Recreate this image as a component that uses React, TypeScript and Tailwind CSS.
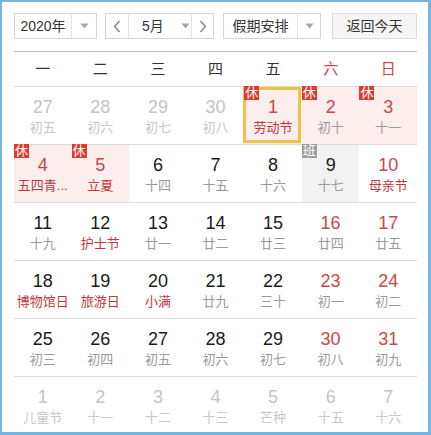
import React from "react";

type Cell = {
  d: number;
  l: string;
  other?: boolean;
  red?: boolean;
  fest?: boolean;
  rest?: boolean;
  work?: boolean;
  sel?: boolean;
};

const rows: Cell[][] = [
  [
    { d: 27, l: "初五", other: true },
    { d: 28, l: "初六", other: true },
    { d: 29, l: "初七", other: true },
    { d: 30, l: "初八", other: true },
    { d: 1, l: "劳动节", red: true, fest: true, rest: true, sel: true },
    { d: 2, l: "初十", red: true, rest: true },
    { d: 3, l: "十一", red: true, rest: true },
  ],
  [
    { d: 4, l: "五四青...", red: true, fest: true, rest: true },
    { d: 5, l: "立夏", red: true, fest: true, rest: true },
    { d: 6, l: "十四" },
    { d: 7, l: "十五" },
    { d: 8, l: "十六" },
    { d: 9, l: "十七", work: true },
    { d: 10, l: "母亲节", red: true, fest: true },
  ],
  [
    { d: 11, l: "十九" },
    { d: 12, l: "护士节", fest: true },
    { d: 13, l: "廿一" },
    { d: 14, l: "廿二" },
    { d: 15, l: "廿三" },
    { d: 16, l: "廿四", red: true },
    { d: 17, l: "廿五", red: true },
  ],
  [
    { d: 18, l: "博物馆日", fest: true },
    { d: 19, l: "旅游日", fest: true },
    { d: 20, l: "小满", fest: true },
    { d: 21, l: "廿九" },
    { d: 22, l: "三十" },
    { d: 23, l: "初一", red: true },
    { d: 24, l: "初二", red: true },
  ],
  [
    { d: 25, l: "初三" },
    { d: 26, l: "初四" },
    { d: 27, l: "初五" },
    { d: 28, l: "初六" },
    { d: 29, l: "初七" },
    { d: 30, l: "初八", red: true },
    { d: 31, l: "初九", red: true },
  ],
  [
    { d: 1, l: "儿童节", other: true },
    { d: 2, l: "十一", other: true },
    { d: 3, l: "十二", other: true },
    { d: 4, l: "十三", other: true },
    { d: 5, l: "芒种", other: true },
    { d: 6, l: "十五", other: true },
    { d: 7, l: "十六", other: true },
  ],
];

const Caret = () => (
  <svg width="9" height="6" viewBox="0 0 9 6">
    <path d="M0.5 0.5 L8.5 0.5 L4.5 5.5 Z" fill="#a8a8a8" />
  </svg>
);

const Chev = ({ dir }: { dir: "l" | "r" }) => (
  <svg width="8" height="13" viewBox="0 0 8 13">
    <path
      d={dir === "l" ? "M6.5 1 L1.5 6.5 L6.5 12" : "M1.5 1 L6.5 6.5 L1.5 12"}
      fill="none"
      stroke="#777"
      strokeWidth="1.2"
    />
  </svg>
);

function DayCell({ c }: { c: Cell }) {
  let bg = "";
  if (c.rest) bg = "bg-[#fdeeee]";
  if (c.work) bg = "bg-[#f2f2f2]";
  let numColor = "text-[#1a1a1a]";
  if (c.red) numColor = "text-[#c9484a]";
  if (c.other) numColor = "text-[#c4c4c4]";
  let lColor = "text-[#9a9a9a]";
  if (c.fest) lColor = "text-[#c2383a]";
  if (c.other) lColor = "text-[#c8c8c8]";
  return (
    <div className={`relative flex flex-col items-center pt-[9px] ${bg}`}>
      {c.sel && (
        <div className="absolute left-[-1px] right-[1px] top-0 bottom-[1px] border-[3px] border-[#eec14a]" />
      )}
      {c.rest && (
        <div className="absolute left-0 top-[-1px] w-[15px] h-[14px] bg-[#dd3b30] text-white text-[13px] leading-[14px] text-center">
          休
        </div>
      )}
      {c.work && (
        <div className="absolute left-0 top-[-1px] w-[15px] h-[14px] bg-[#9c9c9c] text-white text-[13px] leading-[14px] text-center">
          班
        </div>
      )}
      <div className={`relative text-[18px] leading-[22px] ${numColor}`}>{c.d}</div>
      <div className={`relative mt-[2px] text-[13px] leading-[16px] whitespace-nowrap ${lColor}`}>
        {c.l}
      </div>
    </div>
  );
}

export default function App() {
  const week = ["一", "二", "三", "四", "五", "六", "日"];
  return (
    <div
      className="w-[431px] h-[435px] overflow-hidden bg-white border-l-2 border-t-2 border-r-[3px] border-b-[3px] border-[#76b5dd] pt-[11px] pl-3 pr-[11px]"
      style={{ fontFamily: '"Liberation Sans", "Noto Sans CJK SC", sans-serif' }}
    >
      <div className="flex h-[26px] text-[14px] text-[#333]">
        <div className="flex w-[83px] border border-[#d4d4d4] bg-white">
          <div className="w-[56px] flex items-center justify-center">2020年</div>
          <div className="flex-1 border-l border-[#e2e2e2] flex items-center justify-center">
            <Caret />
          </div>
        </div>
        <div className="flex w-[109px] ml-2 border border-[#d4d4d4] bg-white">
          <div className="w-[22px] flex items-center justify-center">
            <Chev dir="l" />
          </div>
          <div className="w-[64px] border-l border-r border-[#e2e2e2] flex items-center pl-[13px]">
            <span>5月</span>
            <span className="ml-[17px] flex">
              <Caret />
            </span>
          </div>
          <div className="flex-1 flex items-center justify-center">
            <Chev dir="r" />
          </div>
        </div>
        <div className="flex w-[98px] ml-[9px] border border-[#d4d4d4] bg-white">
          <div className="w-[73px] flex items-center justify-center">假期安排</div>
          <div className="flex-1 border-l border-[#e2e2e2] flex items-center justify-center">
            <Caret />
          </div>
        </div>
        <div className="w-[85px] ml-[11px] border border-[#dcdcdc] bg-[#f5f5f5] flex items-center justify-center">
          返回今天
        </div>
      </div>
      <div className="mt-3 border-t border-[#b4bcc4]" />
      <div className="grid grid-cols-7 h-[34px] items-center text-[15px] text-center text-[#333]">
        {week.map((w, i) => (
          <div key={w} className={i >= 5 ? "text-[#c9484a]" : ""}>
            {w}
          </div>
        ))}
      </div>
      {rows.map((r, i) => (
        <div key={i} className="grid grid-cols-7 h-[58px] border-t border-[#dcdcdc]">
          {r.map((c, j) => (
            <DayCell key={j} c={c} />
          ))}
        </div>
      ))}
    </div>
  );
}
